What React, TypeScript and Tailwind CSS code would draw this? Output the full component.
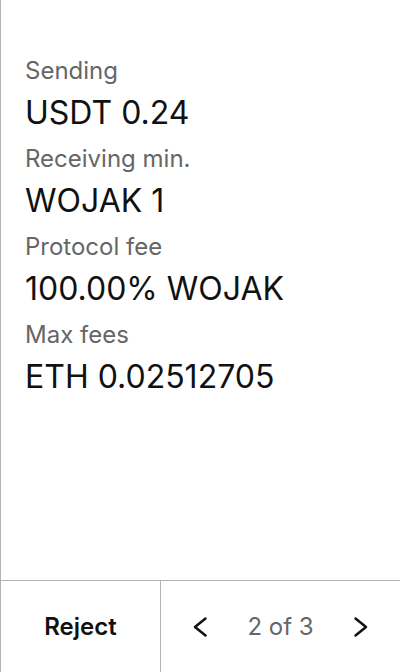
import React from "react"

const rows = [
  { label: "Sending", value: "USDT 0.24" },
  { label: "Receiving min.", value: "WOJAK 1" },
  { label: "Protocol fee", value: "100.00% WOJAK" },
  { label: "Max fees", value: "ETH 0.02512705" },
]

function Chevron({ dir }: { dir: "left" | "right" }) {
  return (
    <svg width="16" height="22" viewBox="0 0 16 22" fill="none" stroke="#111" strokeWidth="2.5" strokeLinecap="round" strokeLinejoin="round">
      {dir === "left" ? <path d="M13.5 2.5 L3 11 L13.5 19.5" /> : <path d="M2.5 2.5 L13 11 L2.5 19.5" />}
    </svg>
  )
}

export default function App() {
  return (
    <div
      className="flex h-[672px] w-[400px] flex-col border-l border-[#b3b3b3] bg-white"
      style={{ fontFamily: "Inter, 'Noto Sans', sans-serif" }}
    >
      <div className="flex flex-1 flex-col gap-[10px] px-6 pt-[55px]">
        {rows.map((row) => (
          <div key={row.label} className="flex flex-col gap-[6px]">
            <p className="text-[24px] leading-[32px] text-[#666666]">{row.label}</p>
            <p className="text-[32px] leading-[40px] text-[#111111]">{row.value}</p>
          </div>
        ))}
      </div>

      <div className="flex h-[92px] border-t border-[#b3b3b3]">
        <button className="flex w-[160px] items-center justify-center border-r border-[#b3b3b3] text-[24px] font-semibold text-[#111111]">
          Reject
        </button>
        <div className="flex flex-1 items-center justify-between px-[31px]">
          <button className="flex items-center justify-center">
            <Chevron dir="left" />
          </button>
          <span className="text-[24px] text-[#666666]">2 of 3</span>
          <button className="flex items-center justify-center">
            <Chevron dir="right" />
          </button>
        </div>
      </div>
    </div>
  )
}
